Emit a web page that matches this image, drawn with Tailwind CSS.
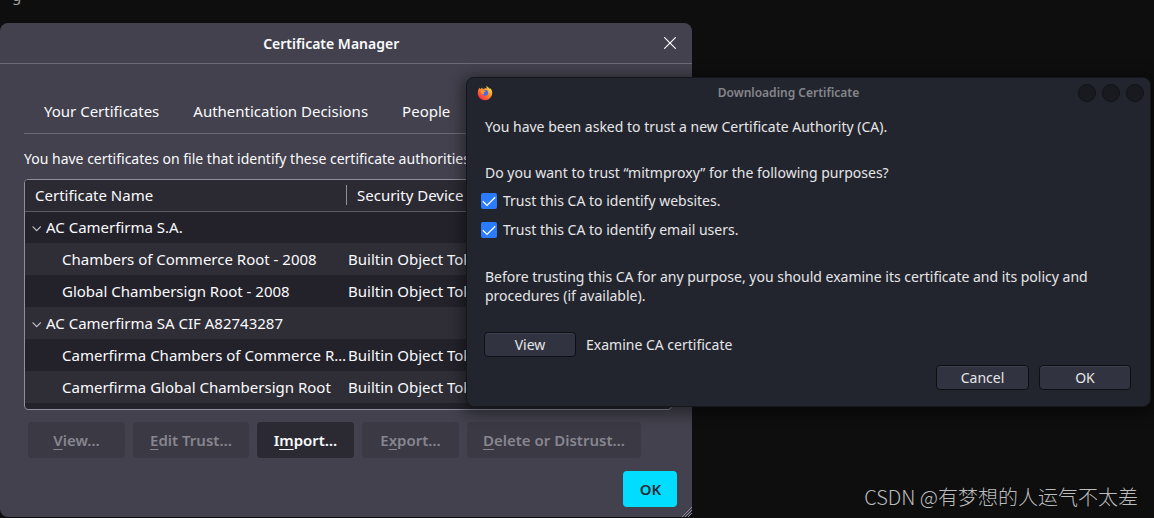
<!DOCTYPE html>
<html lang="en">
<head>
<meta charset="utf-8">
<title>Certificate Manager</title>
<script src="https://cdn.jsdelivr.net/npm/@tailwindcss/browser@4"></script>
</head>
<body class="relative min-h-screen overflow-hidden bg-[#0e0e0f] font-['Noto_Sans','Noto_Sans_CJK_SC',sans-serif] text-[15px] leading-5 text-[#fbfbfe]">
<p class="absolute -top-[13px] left-0 pl-3 text-[15px] leading-4 text-[#a0a0a2]" aria-hidden="true">g</p>

<main class="absolute top-[23px] left-0 w-3/5 rounded-lg bg-[#42414d] pb-2.5">
  <header class="relative flex h-[41px] items-center justify-center border-b border-[#6b6a75] pr-[30px]">
    <h1 class="pt-px text-sm font-semibold">Certificate Manager</h1>
    <button aria-label="Close" class="absolute right-4 grid size-3">
      <svg viewBox="0 0 12 12" class="size-3" fill="none" stroke="currentColor" stroke-width="1.2" stroke-linecap="round"><path d="M.6.6l10.8 10.8M11.4.6L.6 11.4"/></svg>
    </button>
  </header>
  <div class="px-6 pr-5">
    <nav class="mt-6 flex h-[46px] items-center border-b border-[#6b6a75] pl-5">
      <button class="mr-[34px]">Your Certificates</button>
      <button class="mr-[34px]">Authentication Decisions</button>
      <button>People</button>
    </nav>
    <p class="pt-[15px] text-sm leading-5 whitespace-nowrap">You have certificates on file that identify these certificate authorities</p>
    <div class="mt-2.5 h-[231px] overflow-hidden rounded border border-[#8f8f9d] bg-[#23222b]">
      <table class="w-full table-fixed border-collapse text-left whitespace-nowrap">
        <colgroup><col class="w-[322px]"><col></colgroup>
        <thead>
          <tr class="h-[31px] border-b border-[#5c5b66] bg-[#2b2a33]">
            <th class="p-0 font-normal"><span class="block border-r border-[#8f8f9d] pl-2.5">Certificate Name</span></th>
            <th class="p-0 pl-2.5 font-normal">Security Device</th>
          </tr>
        </thead>
        <tbody>
          <tr class="h-8"><td class="p-0" colspan="2"><div class="flex items-center gap-1 pl-[7px]"><svg viewBox="0 0 10 10" class="mt-1 size-2.5" fill="none" stroke="#c4c4cc" stroke-width="1.2" stroke-linecap="round" stroke-linejoin="round"><path d="M1 2.8l3.7 3.8 3.7-3.8"/></svg>AC Camerfirma S.A.</div></td></tr>
          <tr class="h-8 bg-[#2f2e37]"><td class="p-0 pl-[37px]">Chambers of Commerce Root - 2008</td><td class="p-0 pl-px">Builtin Object Token</td></tr>
          <tr class="h-8"><td class="p-0 pl-[37px]">Global Chambersign Root - 2008</td><td class="p-0 pl-px">Builtin Object Token</td></tr>
          <tr class="h-8 bg-[#2f2e37]"><td class="p-0" colspan="2"><div class="flex items-center gap-1 pl-[7px]"><svg viewBox="0 0 10 10" class="mt-1 size-2.5" fill="none" stroke="#c4c4cc" stroke-width="1.2" stroke-linecap="round" stroke-linejoin="round"><path d="M1 2.8l3.7 3.8 3.7-3.8"/></svg>AC Camerfirma SA CIF A82743287</div></td></tr>
          <tr class="h-8"><td class="p-0 pl-[37px]">Camerfirma Chambers of Commerce R…</td><td class="p-0 pl-px">Builtin Object Token</td></tr>
          <tr class="h-8 bg-[#2f2e37]"><td class="p-0 pl-[37px]">Camerfirma Global Chambersign Root</td><td class="p-0 pl-px">Builtin Object Token</td></tr>
        </tbody>
      </table>
    </div>
    <div class="mt-3 flex gap-2 pl-1 font-semibold whitespace-nowrap">
      <button disabled class="h-9 min-w-[97px] rounded bg-[#3a3944] px-4 text-[#87868f]"><u class="underline-offset-3">V</u>iew…</button>
      <button disabled class="h-9 min-w-[116px] rounded bg-[#3a3944] px-4 text-[#87868f]"><u class="underline-offset-3">E</u>dit Trust…</button>
      <button class="h-9 min-w-[97px] rounded bg-[#2b2a33] px-4">I<u class="underline-offset-3">m</u>port…</button>
      <button disabled class="h-9 min-w-[97px] rounded bg-[#3a3944] px-4 text-[#87868f]">E<u class="underline-offset-3">x</u>port…</button>
      <button disabled class="h-9 min-w-[97px] rounded bg-[#3a3944] px-4 text-[#87868f]"><u class="underline-offset-3">D</u>elete or Distrust…</button>
    </div>
  </div>
  <footer class="mt-[13px] flex justify-end pr-[15px]">
    <button class="h-9 w-[54px] rounded bg-[#00ddff] font-semibold text-[#2b2a33]">OK</button>
  </footer>
  <svg viewBox="0 0 11 11" class="absolute right-0 bottom-0 size-[11px]" fill="none" stroke="#8b8a94" stroke-width="1"><path d="M1 11L11 1M4 11l7-7M7 11l4-4"/></svg>
</main>

<section role="dialog" aria-labelledby="dialog-title" class="absolute top-[77px] right-[3px] left-[466px] rounded-lg border border-[#15161b] bg-[#23252e] pb-4 text-sm leading-5 text-[#e6e6e8] shadow-[0_3px_14px_4px_rgba(0,0,0,0.4)]">
  <header class="relative flex h-[30px] items-center justify-center">
    <svg viewBox="0 0 16 16" class="absolute left-2.5 size-4">
      <defs>
        <linearGradient id="flame" x1="0.85" y1="0.1" x2="0.2" y2="0.95"><stop offset="0" stop-color="#ffe14a"/><stop offset=".45" stop-color="#ff8a2b"/><stop offset="1" stop-color="#f5264e"/></linearGradient>
      </defs>
      <path fill="url(#flame)" d="M9.5.8c-.3 1.3.2 2.100 1.100 3-1.500-.7-3.200-.5-4.200.3-.8-.3-1.200-1-1.200-1.700-.8.4-1.300 1-1.600 1.700-.8-.3-1-.9-1-1.500C1.400 4 .8 6 .8 8.200c0 4 3.200 7 7.200 7s7.200-3.200 7.200-7.200c0-2.200-.8-3.900-2.200-5 .1.500.1.900.1 1.300C12 2.600 10.800 2.200 9.500.8z"/>
      <circle cx="8.100" cy="7.800" r="3" fill="#4a69e2"/>
      <path fill="#ff9a2c" d="M3.800 5.400c1.200-.8 2.600-.6 3.500.2l1.600.2c-.2.900-1.300 1.200-2 1.500-.1 1 .2 1.700-.1 2.300C5 9.600 3.600 7.700 3.800 5.400z"/>
    </svg>
    <h2 id="dialog-title" class="pr-10 text-xs font-semibold text-[#85868b]">Downloading Certificate</h2>
    <div class="absolute right-1.5 flex gap-1.5">
      <button aria-label="Minimize" class="size-[18px] rounded-full border border-[#121317] bg-[#191a1f]"></button>
      <button aria-label="Maximize" class="size-[18px] rounded-full border border-[#121317] bg-[#191a1f]"></button>
      <button aria-label="Close dialog" class="size-[18px] rounded-full border border-[#121317] bg-[#191a1f]"></button>
    </div>
  </header>
  <div class="px-[18px] pt-[9px]">
    <p class="leading-[19px]">You have been asked to trust a new Certificate Authority (CA).</p>
    <p class="mt-[27px] leading-[19px]">Do you want to trust “mitmproxy” for the following purposes?</p>
    <div class="-ml-1 mt-[9px] flex flex-col gap-[9px]">
      <label class="flex items-center gap-1.5"><span class="grid"><input type="checkbox" checked class="col-start-1 row-start-1 size-4 appearance-none rounded-xs bg-[#2a7bff]"><svg viewBox="0 0 16 16" class="pointer-events-none col-start-1 row-start-1 size-4" fill="none" stroke="#fff" stroke-width="1.3"><path d="M1.800 8.200l4.200 4.200 8.200-8.200"/></svg></span>Trust this CA to identify websites.</label>
      <label class="flex items-center gap-1.5"><span class="grid"><input type="checkbox" checked class="col-start-1 row-start-1 size-4 appearance-none rounded-xs bg-[#2a7bff]"><svg viewBox="0 0 16 16" class="pointer-events-none col-start-1 row-start-1 size-4" fill="none" stroke="#fff" stroke-width="1.3"><path d="M1.800 8.200l4.200 4.200 8.200-8.200"/></svg></span>Trust this CA to identify email users.</label>
    </div>
    <p class="mt-[27px] pr-10 leading-[19px]">Before trusting this CA for any purpose, you should examine its certificate and its policy and procedures (if available).</p>
    <div class="-ml-px mt-[27px] flex items-center gap-2.5">
      <button class="h-[25px] w-[92px] rounded border border-[#0e0f12] bg-[#313440] shadow-[inset_0_1px_0_#3e414d]">View</button>
      <span>Examine CA certificate</span>
    </div>
    <div class="mt-2 flex justify-end gap-2.5 pr-px">
      <button class="h-[25px] w-[93px] rounded border border-[#0e0f12] bg-[#313440] shadow-[inset_0_1px_0_#3e414d]">Cancel</button>
      <button class="h-[25px] w-[92px] rounded border border-[#0e0f12] bg-[#313440] shadow-[inset_0_1px_0_#3e414d]">OK</button>
    </div>
  </div>
</section>

<p class="absolute right-4 bottom-[7px] font-['Noto_Sans_CJK_SC',sans-serif] text-xl leading-7 font-light text-[#bcbcbd]">CSDN @有梦想的人运气不太差</p>
</body>
</html>
